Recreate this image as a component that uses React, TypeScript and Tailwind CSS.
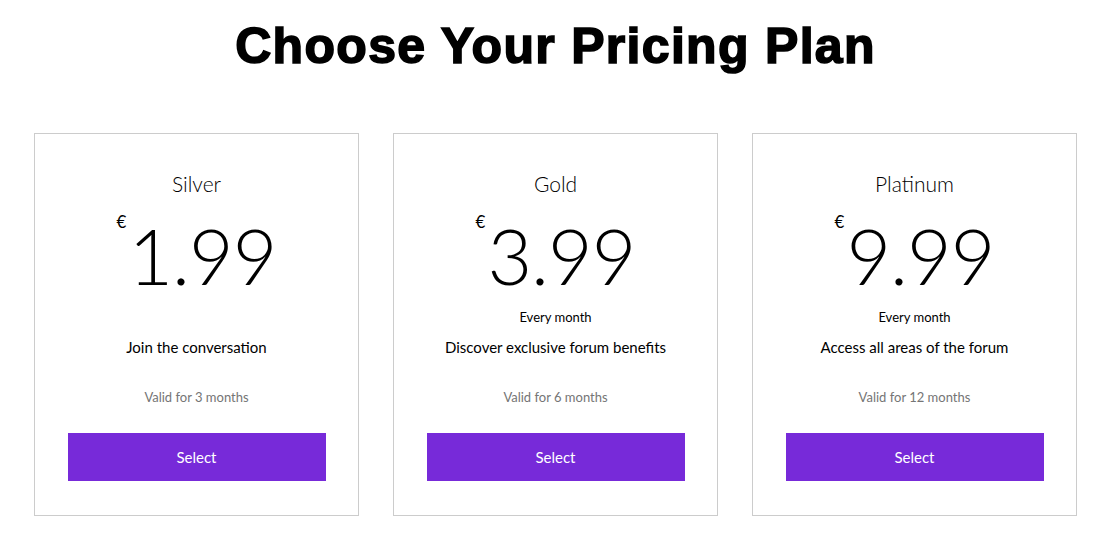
const plans = [
  { name: 'Silver', price: '1.99', every: false, desc: 'Join the conversation', valid: 'Valid for 3 months' },
  { name: 'Gold', price: '3.99', every: true, desc: 'Discover exclusive forum benefits', valid: 'Valid for 6 months' },
  { name: 'Platinum', price: '9.99', every: true, desc: 'Access all areas of the forum', valid: 'Valid for 12 months' },
]

export default function App() {
  return (
    <main className="min-h-screen bg-white pl-[34px] pr-[19px] font-['Lato','Open_Sans',sans-serif] text-black">
      {/* Heading */}
      <h1 className="pt-[18px] text-center font-['Liberation_Sans',Arial,sans-serif] text-[50px] font-black leading-[56px] tracking-[1.3px] [-webkit-text-stroke:1.6px_black]">
        Choose Your Pricing Plan
      </h1>

      {/* Plans */}
      <div className="mt-[59px] grid grid-cols-3 gap-[34px]">
        {plans.map((p) => (
          <div key={p.name} className="flex h-[383px] flex-col items-center border border-[#cccccc] pt-[37px]">
            <h2 className="text-[21px] font-light leading-[26px]">{p.name}</h2>
            <div className="mt-[18px] flex items-start">
              <span className="-mt-[3px] mr-[2px] text-[17px] leading-[20px]">€</span>
              <span className="text-[77px] font-light leading-[80px] tracking-[-1px]">{p.price}</span>
            </div>
            <p className={`mt-[14px] text-[13px] leading-[16px] ${p.every ? '' : 'invisible'}`}>Every month</p>
            <p className="mt-[12px] text-[15px] leading-[20px]">{p.desc}</p>
            <p className="mt-[32px] text-[13px] leading-[16px] text-[#757575]">{p.valid}</p>
            <button className="mt-[28px] h-[48px] w-[258px] bg-[#772ad9] text-[15px] text-white">Select</button>
          </div>
        ))}
      </div>
    </main>
  )
}
